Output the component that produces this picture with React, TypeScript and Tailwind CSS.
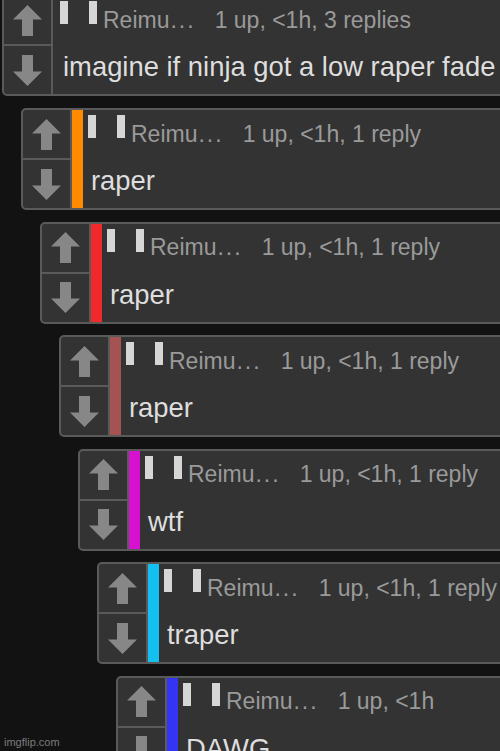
import React from "react";

type Item = {
  ml: string;
  bar: string | null;
  meta: string;
  text: string;
  pl: string;
};

const items: Item[] = [
  { ml: "ml-[2px]", bar: null, meta: "1 up, <1h, 3 replies", text: "imagine if ninja got a low raper fade", pl: "pl-[7px]" },
  { ml: "ml-[21px]", bar: "bg-[#ff8a00]", meta: "1 up, <1h, 1 reply", text: "raper", pl: "pl-[5px]" },
  { ml: "ml-[40px]", bar: "bg-[#f02a2a]", meta: "1 up, <1h, 1 reply", text: "raper", pl: "pl-[5px]" },
  { ml: "ml-[59px]", bar: "bg-[#a45252]", meta: "1 up, <1h, 1 reply", text: "raper", pl: "pl-[5px]" },
  { ml: "ml-[78px]", bar: "bg-[#d811d0]", meta: "1 up, <1h, 1 reply", text: "wtf", pl: "pl-[5px]" },
  { ml: "ml-[97px]", bar: "bg-[#14c0f0]", meta: "1 up, <1h, 1 reply", text: "traper", pl: "pl-[5px]" },
  { ml: "ml-[116px]", bar: "bg-[#3434f4]", meta: "1 up, <1h", text: "DAWG", pl: "pl-[5px]" },
];

function Arrow({ down }: { down?: boolean }) {
  return (
    <svg width="29" height="31" viewBox="0 0 29 31" className={down ? "rotate-180" : ""}>
      <polygon points="14.5,0 29,14.5 20,14.5 20,31 9,31 9,14.5 0,14.5" fill="#878787" />
    </svg>
  );
}

function Comment({ item }: { item: Item }) {
  return (
    <div
      className={`${item.ml} flex h-[102px] w-[700px] shrink-0 rounded-[5px] border-2 border-[#5a5a5a] bg-[#333333] overflow-hidden`}
    >
      <div className="flex w-[49px] shrink-0 flex-col border-r-2 border-[#5a5a5a]">
        <div className="flex flex-1 items-center justify-center border-b-2 border-[#5a5a5a]">
          <Arrow />
        </div>
        <div className="flex flex-1 items-center justify-center">
          <Arrow down />
        </div>
      </div>
      {item.bar && <div className={`w-[11px] shrink-0 ${item.bar}`} />}
      <div className={`flex flex-col ${item.pl}`}>
        <div className="flex h-[36px] items-start">
          <div className="mt-[5px] h-[23px] w-[8px] bg-[#d6d6d6]" />
          <div className="ml-[21px] mt-[5px] h-[23px] w-[8px] bg-[#d6d6d6]" />
          <span className="ml-[6px] mt-[12.5px] whitespace-nowrap text-[23px] leading-[23px] text-[#9a9a9a]">
            Reimu
          </span>
          <span className="ml-[1px] mt-[12.5px] whitespace-nowrap text-[23px] leading-[23px] tracking-[2px] text-[#9a9a9a]">
            ...
          </span>
          <span className="ml-[19px] mt-[12.5px] whitespace-nowrap text-[23px] leading-[23px] text-[#9a9a9a]">
            {item.meta}
          </span>
        </div>
        <div className="ml-[3px] mt-[21px] whitespace-nowrap text-[27.4px] leading-[27px] text-[#dedede]">
          {item.text}
        </div>
      </div>
    </div>
  );
}

export default function App() {
  return (
    <div
      className="relative h-[751px] w-[500px] overflow-hidden bg-[#121212]"
      style={{ fontFamily: '"Liberation Sans", Arial, sans-serif' }}
    >
      <div className="-mt-[5.6px] flex flex-col gap-[11.6px]">
        {items.map((it, i) => (
          <Comment key={i} item={it} />
        ))}
      </div>
      <div className="absolute bottom-[3px] left-[4px] text-[11px] leading-none text-[#7c7c7c]">
        imgflip.com
      </div>
    </div>
  );
}
